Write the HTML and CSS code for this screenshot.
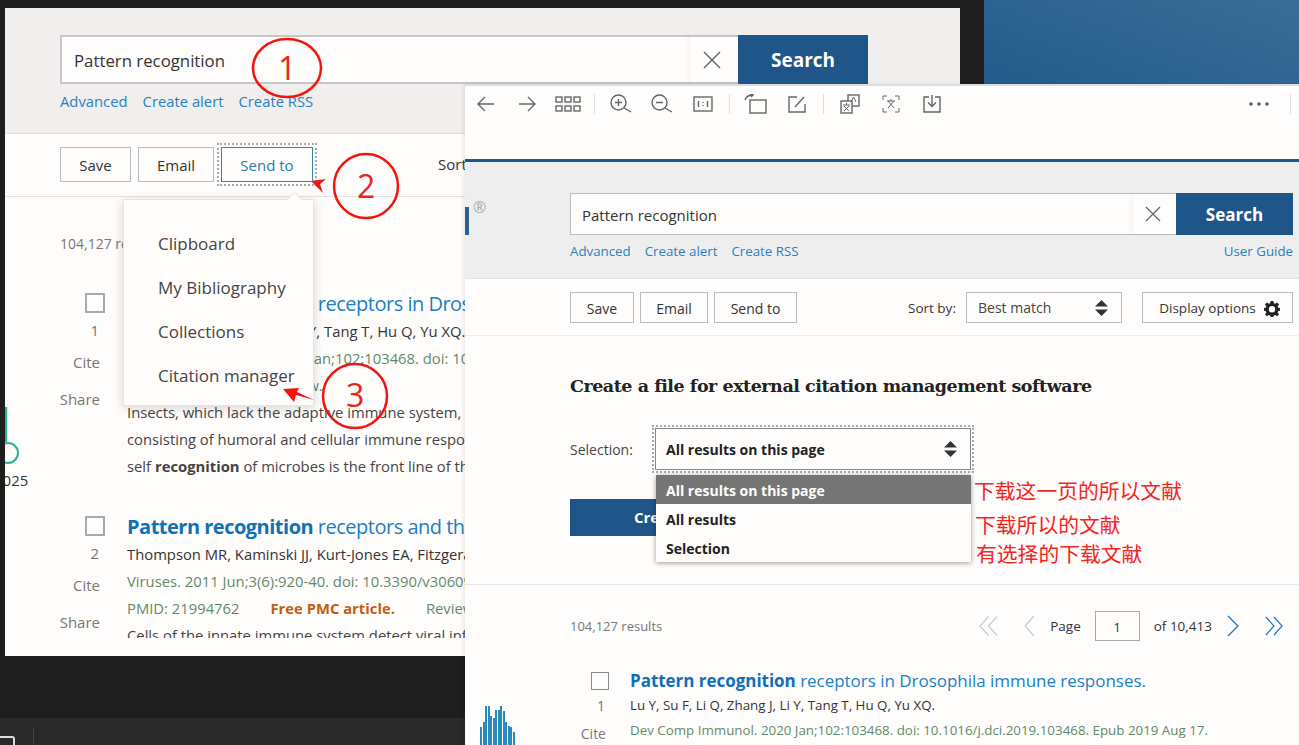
FILE: index.html
```html
<!DOCTYPE html>
<html>
  <head>
    <meta charset="utf-8">
    <title>Pattern recognition - citation manager</title>
    <link rel="stylesheet" href="styles.css">
  </head>
  <body>
    <div class="desktop">
      <div class="wallpaper"></div>
      <div class="taskbar">
        <span class="task-box"></span>
        <span class="task-line"></span>
      </div>

      <!-- back browser window -->
      <div class="win-back">
        <div class="back-head">
          <div class="back-search">
            <div class="back-input">Pattern recognition</div>
            <div class="back-clear">
              <svg width="20" height="20" viewBox="0 0 20 20"><path d="M2 2L18 18M18 2L2 18" stroke="#666" stroke-width="1.5" fill="none"/></svg>
            </div>
            <div class="back-go">Search</div>
          </div>
          <div class="back-links">
            <a>Advanced</a>
            <a>Create alert</a>
            <a>Create RSS</a>
          </div>
        </div>

        <div class="back-tools">
          <span class="back-btn btn-save">Save</span>
          <span class="back-btn btn-email">Email</span>
          <span class="back-btn btn-send">Send to</span>
          <span class="back-sort">Sort by:</span>
        </div>

        <div class="back-main">
          <div class="back-count">104,127 results</div>

          <div class="back-result">
            <div class="back-side">
              <span class="back-check"></span>
              <span class="back-num">1</span>
              <span class="back-act act-cite">Cite</span>
              <span class="back-act act-share">Share</span>
            </div>
            <div class="back-body">
              <div class="back-title"><b>Pattern recognition</b> receptors in Drosophila immune responses.</div>
              <div class="back-line">Lu Y, Su F, Li Q, Zhang J, Li Y, Tang T, Hu Q, Yu XQ.</div>
              <div class="back-line green">Dev Comp Immunol. 2020 Jan;102:103468. doi: 10.1016/j.dci.2019.103468.</div>
              <div class="back-line green"><span class="pmid">PMID: 31430490</span>Review.</div>
              <div class="back-line grey">Insects, which lack the adaptive immune system, rely on the innate immunity</div>
              <div class="back-line grey">consisting of humoral and cellular immune responses to defend against</div>
              <div class="back-line grey">self <b>recognition</b> of microbes is the front line of the innate immune system</div>
            </div>
          </div>

          <div class="back-result second">
            <div class="back-side">
              <span class="back-check"></span>
              <span class="back-num">2</span>
              <span class="back-act act-cite">Cite</span>
              <span class="back-act act-share">Share</span>
            </div>
            <div class="back-body">
              <div class="back-title"><b>Pattern recognition</b> receptors and the innate immune response</div>
              <div class="back-line">Thompson MR, Kaminski JJ, Kurt-Jones EA, Fitzgerald KA.</div>
              <div class="back-line green">Viruses. 2011 Jun;3(6):920-40. doi: 10.3390/v3060920.</div>
              <div class="back-line green"><span class="pmid">PMID: 21994762</span><span class="free">Free PMC article.</span>Review.</div>
              <div class="back-line grey">Cells of the innate immune system detect viral infection</div>
            </div>
          </div>
        </div>

        <div class="timeline">
          <svg width="30" height="70" viewBox="0 0 30 70"><path d="M1 0V35" stroke="#2bb296" stroke-width="2.5" fill="none"/><circle cx="3" cy="46" r="10" stroke="#2bb296" stroke-width="2" fill="none"/></svg>
          <span class="timeline-year">2025</span>
        </div>

        <div class="send-menu">
          <span class="send-tip"></span>
          <div class="send-item">Clipboard</div>
          <div class="send-item">My Bibliography</div>
          <div class="send-item">Collections</div>
          <div class="send-item">Citation manager</div>
        </div>
      </div>

      <!-- red notes drawn over the back window -->
      <svg class="marks" width="470" height="440" viewBox="0 0 470 440">
        <ellipse cx="287" cy="68" rx="34" ry="29" stroke="#f5140c" stroke-width="2.5" fill="none"/>
        <circle cx="366" cy="186" r="32" stroke="#f5140c" stroke-width="2.5" fill="none"/>
        <circle cx="355" cy="396" r="32" stroke="#f5140c" stroke-width="2.5" fill="none"/>
        <path d="M311 181L326 179L320 184L323 193Z" fill="#f5140c"/>
        <path d="M283 389L299 388L297 392L314 400L296 395L294 402Z" fill="#f5140c"/>
      </svg>
      <span class="mark-num num-1">1</span>
      <span class="mark-num num-2">2</span>
      <span class="mark-num num-3">3</span>

      <!-- front viewer window -->
      <div class="win-front">
        <div class="viewer-bar">
          <span class="tool"><svg width="20" height="20" viewBox="0 0 20 20"><path d="M18 10H2M9 3L2 10L9 17"/></svg></span>
          <span class="tool"><svg width="20" height="20" viewBox="0 0 20 20"><path d="M2 10H18M11 3L18 10L11 17"/></svg></span>
          <span class="tool"><svg width="26" height="16" viewBox="0 0 26 16"><rect x="1" y="1" width="6" height="5"/><rect x="10" y="1" width="6" height="5"/><rect x="19" y="1" width="6" height="5"/><rect x="1" y="10" width="6" height="5"/><rect x="10" y="10" width="6" height="5"/><rect x="19" y="10" width="6" height="5"/></svg></span>
          <span class="tool-sep"></span>
          <span class="tool"><svg width="22" height="20" viewBox="0 0 22 20"><circle cx="8.5" cy="8.5" r="7.5"/><path d="M5 8.5H12M8.5 5V12M14 14L21 18"/></svg></span>
          <span class="tool"><svg width="22" height="20" viewBox="0 0 22 20"><circle cx="8.5" cy="8.5" r="7.5"/><path d="M5 8.5H12M14 14L21 18"/></svg></span>
          <span class="tool"><svg width="20" height="16" viewBox="0 0 20 16"><rect x="1" y="1" width="18" height="14"/><path d="M5.5 5V11M14.5 5V11M10 6V7M10 9V10"/></svg></span>
          <span class="tool-sep"></span>
          <span class="tool"><svg width="24" height="20" viewBox="0 0 24 20"><rect x="6" y="6" width="16" height="13"/><path d="M1 6C2 3 5 1 9 1M6 0L9 1L7 3"/></svg></span>
          <span class="tool"><svg width="20" height="20" viewBox="0 0 20 20"><path d="M10 3H2V18H18V10M8 13L17 3"/></svg></span>
          <span class="tool-sep"></span>
          <span class="tool"><svg width="20" height="20" viewBox="0 0 20 20"><rect x="8" y="1" width="11" height="11"/><rect class="solid" x="1" y="7" width="11" height="12"/><path class="thin" d="M3 11H10M6.500 9V11M4 17L9 12M4 12L9 17M11 8L13.500 3L16 8"/></svg></span>
          <span class="tool"><svg width="18" height="18" viewBox="0 0 18 18"><path d="M1 5V1H5M13 1H17V5M17 13V17H13M5 17H1V13M5 6H13M9 4V6M6 13L12 6M6 6L12 13" class="thin"/></svg></span>
          <span class="tool"><svg width="18" height="18" viewBox="0 0 18 18"><path d="M6 2H1V17H17V2H12M9 0V11M5 7.500L9 11.500L13 7.500"/></svg></span>
          <span class="viewer-more">
            <svg width="20" height="4" viewBox="0 0 20 4"><circle cx="2" cy="2" r="1.700"/><circle cx="10" cy="2" r="1.700"/><circle cx="18" cy="2" r="1.700"/></svg>
          </span>
          <span class="more-sep"></span>
        </div>

        <div class="front-head">
          <span class="logo-edge"></span>
          <span class="logo-reg">®</span>
          <div class="front-search">
            <div class="front-input">Pattern recognition</div>
            <div class="front-clear">
              <svg width="16" height="16" viewBox="0 0 16 16"><path d="M1 1L15 15M15 1L1 15" stroke="#666" stroke-width="1.300" fill="none"/></svg>
            </div>
            <div class="front-go">Search</div>
          </div>
          <div class="front-links">
            <a>Advanced</a>
            <a>Create alert</a>
            <a>Create RSS</a>
            <a class="guide">User Guide</a>
          </div>
        </div>

        <div class="front-tools">
          <span class="front-btn btn-w64">Save</span>
          <span class="front-btn btn-w67">Email</span>
          <span class="front-btn btn-w82">Send to</span>
          <span class="sort-label">Sort by:</span>
          <span class="sort-select">Best match
            <svg width="13" height="16" viewBox="0 0 13 16"><path d="M6.500 0L13 6.500H0ZM6.500 16L0 9.500H13Z" fill="#333"/></svg>
          </span>
          <span class="front-btn display-btn">Display options
            <svg width="16" height="16" viewBox="0 0 16 16"><path fill="#222" fill-rule="evenodd" d="M6.600 0H9.400L9.800 2.200L11.300 2.800L13.100 1.500L15 3.400L13.700 5.200L14.300 6.700L16 7V9.800L14.300 10.100L13.700 11.600L15 13.400L13.100 15.300L11.300 14L9.800 14.600L9.400 16H6.600L6.200 14.600L4.700 14L2.900 15.300L1 13.400L2.300 11.600L1.700 10.100L0 9.800V7L1.700 6.700L2.300 5.200L1 3.400L2.900 1.500L4.700 2.800L6.200 2.200ZM8 5A3.200 3.200 0 1 0 8 11.400A3.200 3.200 0 1 0 8 5Z"/></svg>
          </span>
        </div>

        <div class="cite-panel">
          <h2>Create a file for external citation management software</h2>
          <div class="cite-row">
            <span class="cite-label">Selection:</span>
            <span class="cite-select">All results on this page
              <svg width="13" height="16" viewBox="0 0 13 16"><path d="M6.500 0L13 6.500H0ZM6.500 16L0 9.500H13Z" fill="#333"/></svg>
            </span>
          </div>
          <div class="cite-create">Create file</div>
          <div class="cite-options">
            <div class="cite-option active">All results on this page</div>
            <div class="cite-option">All results</div>
            <div class="cite-option">Selection</div>
          </div>
        </div>

        <div class="pager-row">
          <span class="front-count">104,127 results</span>
          <span class="pager">
            <svg class="pg-first" width="19" height="22" viewBox="0 0 20 22"><path d="M10 1L1 11L10 21M19 1L10 11L19 21" stroke="#ccc"/></svg>
            <svg class="pg-prev" width="11" height="22" viewBox="0 0 11 22"><path d="M10 1L1 11L10 21" stroke="#ccc"/></svg>
            <span class="pg-word">Page</span>
            <span class="pg-box">1</span>
            <span class="pg-of">of 10,413</span>
            <svg class="pg-next" width="12" height="22" viewBox="0 0 12 22"><path d="M1 1L11 11L1 21" stroke="#1a73c4"/></svg>
            <svg class="pg-last" width="18" height="22" viewBox="0 0 20 22"><path d="M1 1L10 11L1 21M10 1L19 11L10 21" stroke="#1a73c4"/></svg>
          </span>
        </div>

        <div class="front-result">
          <div class="front-side">
            <span class="front-check"></span>
            <span class="front-num">1</span>
            <span class="front-cite">Cite</span>
          </div>
          <div class="front-body">
            <div class="front-title"><b>Pattern recognition</b> receptors in Drosophila immune responses.</div>
            <div class="front-line">Lu Y, Su F, Li Q, Zhang J, Li Y, Tang T, Hu Q, Yu XQ.</div>
            <div class="front-line green">Dev Comp Immunol. 2020 Jan;102:103468. doi: 10.1016/j.dci.2019.103468. Epub 2019 Aug 17.</div>
          </div>
        </div>

        <svg class="histogram" width="36" height="40" viewBox="0 0 36 40">
          <g fill="#2a8bb9">
            <rect x="0" y="22" width="2" height="18"/>
            <rect x="3" y="17" width="2" height="23"/>
            <rect x="5" y="1" width="2" height="39"/>
            <rect x="8" y="1" width="2" height="39"/>
            <rect x="10" y="11" width="2" height="29"/>
            <rect x="13" y="13" width="2" height="27"/>
            <rect x="15" y="5" width="2" height="35"/>
            <rect x="18" y="5" width="2" height="35"/>
            <rect x="20" y="1" width="2" height="39"/>
            <rect x="23" y="6" width="2" height="34"/>
            <rect x="25" y="17" width="2" height="23"/>
            <rect x="28" y="21" width="2" height="19"/>
            <rect x="30" y="22" width="2" height="18"/>
            <rect x="33" y="27" width="2" height="13"/>
          </g>
        </svg>
      </div>

      <span class="note note-1">下载这一页的所以文献</span>
      <span class="note note-2">下载所以的文献</span>
      <span class="note note-3">有选择的下载文献</span>
    </div>
  </body>
</html>
```

FILE: styles.css
```css
* {
  box-sizing: border-box;
}

body {
  margin: 0;
  background-color: #1e1e1e;
  font-family: "Open Sans", "Noto Sans", sans-serif;
  overflow: hidden;
}

a {
  color: #2a7fc1;
}

b {
  font-weight: 700;
}

.desktop {
  position: relative;
  width: 1299px;
  height: 745px;
  overflow: hidden;
}

.wallpaper {
  position: absolute;
  left: 984px;
  top: 0;
  width: 315px;
  height: 90px;
  background: linear-gradient(20deg, #225a8a, #3a6e98);
}

.taskbar {
  position: absolute;
  left: 0;
  top: 718px;
  width: 466px;
  height: 27px;
  background-color: #292929;
}

.task-box {
  position: absolute;
  left: -6px;
  top: 18px;
  width: 21px;
  height: 20px;
  border: 2px solid #ddd;
  border-radius: 3px;
}

.task-line {
  position: absolute;
  left: 33px;
  top: 10px;
  width: 1px;
  height: 17px;
  background-color: #444;
}

/* back window */
.win-back {
  position: absolute;
  left: 5px;
  top: 8px;
  width: 955px;
  height: 648px;
  background-color: #fffdfb;
  overflow: hidden;
}

.back-head {
  height: 126px;
  padding: 27px 0 0 55px;
  background-color: #f1efed;
  border-bottom: 1px solid #e2e0df;
}

.back-search {
  display: flex;
  width: 808px;
  height: 49px;
}

.back-input {
  flex: 1;
  padding: 2px 0 0 12px;
  line-height: 43px;
  font-size: 16.8px;
  color: #333;
  background-color: #fffdfb;
  border: 2px solid #c8c6c6;
  border-right: none;
}

.back-clear {
  display: flex;
  align-items: center;
  justify-content: center;
  width: 48px;
  padding-right: 4px;
  background-color: #fffdfb;
  border-top: 2px solid #c8c6c6;
  border-bottom: 2px solid #c8c6c6;
  box-shadow: -3px 0 4px rgba(0, 0, 0, 0.03);
}

.back-go {
  width: 130px;
  padding-top: 2px;
  line-height: 47px;
  text-align: center;
  font-size: 19px;
  font-weight: 700;
  color: #fff;
  background-color: #20558a;
}

.back-links {
  display: flex;
  gap: 15px;
  margin-top: 7px;
  font-size: 14.8px;
  line-height: 20px;
}

/* the front window starts 460px into this one */
.back-tools {
  display: flex;
  gap: 7px;
  width: 460px;
  height: 63px;
  padding: 13px 0 0 55px;
  border-bottom: 1px solid #e6e4e2;
  overflow: hidden;
}

.back-btn {
  flex-shrink: 0;
  height: 35px;
  padding-top: 2px;
  line-height: 31px;
  text-align: center;
  font-size: 15px;
  color: #333;
  border: 1px solid #bbb;
}

.btn-save {
  width: 71px;
}

.btn-email {
  width: 76px;
}

.btn-send {
  width: 92px;
  color: #2a7fa8;
  border-color: #3a86a8;
  outline: 2px dotted #aaa;
  outline-offset: 2px;
}

.back-sort {
  flex-shrink: 0;
  margin-left: 118px;
  line-height: 35px;
  font-size: 15px;
  white-space: nowrap;
  color: #333;
}

.back-main {
  width: 460px;
  padding: 36px 0 0 55px;
  overflow: hidden;
}

.back-count {
  line-height: 22px;
  font-size: 14px;
  color: #777;
}

.back-result {
  display: flex;
  gap: 22px;
  height: 223px;
  margin-top: 38px;
}

.back-result.second {
  margin-top: 0;
  height: 122px;
  overflow: hidden;
}

.back-side {
  display: flex;
  flex-direction: column;
  align-items: flex-end;
  width: 45px;
  flex-shrink: 0;
  color: #777;
  font-size: 15px;
}

.back-check {
  width: 20px;
  height: 20px;
  flex-shrink: 0;
  border: 2px solid #aaa;
}

.back-num {
  margin: 6px 6px 0 0;
  line-height: 22px;
}

.back-act {
  margin-right: 5px;
  line-height: 22px;
}

.act-cite {
  margin-top: 10px;
}

.act-share {
  margin-top: 15px;
}

.back-body {
  min-width: 0;
  margin-top: -3px;
  white-space: nowrap;
}

.back-title {
  line-height: 28px;
  font-size: 20px;
  letter-spacing: -0.5px;
  color: #1a7fc4;
}

.back-title b {
  color: #0f6fb8;
}

.back-line {
  line-height: 27px;
  font-size: 14.8px;
  color: #333;
}

.back-line.green,
.front-line.green {
  color: #5f8a6c;
}

.back-line.grey {
  color: #444;
}

.pmid {
  margin-right: 31px;
}

.free {
  margin-right: 31px;
  font-weight: 700;
  color: #c0600f;
}

.timeline {
  position: absolute;
  left: 0;
  top: 399px;
  width: 30px;
  height: 85px;
}

.timeline-year {
  position: absolute;
  left: -11px;
  top: 63px;
  font-size: 15px;
  color: #333;
}

.send-menu {
  position: absolute;
  left: 118px;
  top: 191px;
  width: 191px;
  height: 207px;
  padding-top: 22px;
  background-color: #fffdfb;
  border: 1px solid #e8e6e4;
  box-shadow: 0 2px 10px rgba(0, 0, 0, 0.16);
}

.send-item {
  height: 44px;
  padding-left: 34px;
  line-height: 44px;
  font-size: 17px;
  color: #444;
}

.send-tip {
  position: absolute;
  left: 165px;
  top: -6px;
  width: 11px;
  height: 11px;
  background-color: #fffdfb;
  border-left: 1px solid #e8e6e4;
  border-top: 1px solid #e8e6e4;
  transform: rotate(45deg);
}

/* red notes */
.marks {
  position: absolute;
  left: 0;
  top: 0;
}

.mark-num {
  position: absolute;
  font-size: 32px;
  line-height: 40px;
  color: #e8261c;
}

.num-1 {
  left: 278px;
  top: 48px;
}

.num-2 {
  left: 357px;
  top: 166px;
}

.num-3 {
  left: 346px;
  top: 375px;
}

.note {
  position: absolute;
  font-family: "Noto Sans CJK SC", sans-serif;
  font-size: 20.8px;
  line-height: 30px;
  white-space: nowrap;
  color: #f5241c;
}

.note-1 {
  left: 974px;
  top: 475px;
}

.note-2 {
  left: 975px;
  top: 509px;
}

.note-3 {
  left: 976px;
  top: 538px;
}

/* front window */
.win-front {
  position: absolute;
  left: 465px;
  top: 84px;
  width: 834px;
  height: 661px;
  background-color: #fffdfb;
  box-shadow: -2px 0 4px rgba(0, 0, 0, 0.08);
  overflow: hidden;
}

.viewer-bar {
  display: flex;
  align-items: flex-start;
  height: 78px;
  padding-top: 8px;
  border-top: 2px solid #ddd;
  border-bottom: 3px solid #20558a;
}

.tool {
  display: flex;
  align-items: center;
  justify-content: center;
  width: 41px;
  height: 20px;
}

.tool svg {
  fill: none;
  stroke: #666;
  stroke-width: 1.400;
}

.tool svg .thin {
  stroke-width: 1;
}

.tool svg .solid {
  fill: #fffdfb;
}

.tool-sep {
  width: 1px;
  height: 20px;
  margin: 0 5px 0 6px;
  background-color: #ddd;
}

.viewer-more {
  display: flex;
  align-items: center;
  height: 20px;
  margin-left: 297px;
  fill: #555;
}

.more-sep {
  width: 1px;
  height: 20px;
  margin-left: 21px;
  background-color: #ddd;
}

.front-head {
  position: relative;
  height: 117px;
  padding: 31px 6px 0 105px;
  background-color: #efeeee;
  border-bottom: 1px solid #e2e2e2;
}

.logo-edge {
  position: absolute;
  left: 0;
  top: 45px;
  width: 4px;
  height: 28px;
  background-color: #2e6096;
}

.logo-reg {
  position: absolute;
  left: 8px;
  top: 34px;
  font-size: 16px;
  line-height: 22px;
  color: #aaa;
}

.front-search {
  display: flex;
  height: 42px;
}

.front-input {
  flex: 1;
  padding: 2px 0 0 11px;
  line-height: 38px;
  font-size: 15px;
  color: #333;
  background-color: #fffdfb;
  border: 1px solid #bbb;
  border-right: none;
}

.front-clear {
  display: flex;
  align-items: center;
  justify-content: center;
  width: 43px;
  padding-right: 4px;
  background-color: #fffdfb;
  border-top: 1px solid #bbb;
  border-bottom: 1px solid #bbb;
  box-shadow: -3px 0 4px rgba(0, 0, 0, 0.03);
}

.front-go {
  width: 117px;
  padding-top: 2px;
  line-height: 40px;
  text-align: center;
  font-size: 17px;
  font-weight: 700;
  color: #fff;
  background-color: #20558a;
}

.front-links {
  display: flex;
  gap: 14px;
  margin-top: 7px;
  font-size: 13.3px;
  line-height: 18px;
}

.guide {
  margin-left: auto;
}

.front-tools {
  display: flex;
  height: 57px;
  padding: 13px 6px 0 105px;
  border-bottom: 1px solid #eeeeee;
}

.front-btn {
  height: 31px;
  padding-top: 2px;
  line-height: 27px;
  text-align: center;
  font-size: 14px;
  color: #333;
  border: 1px solid #bbb;
}

.btn-w64 {
  width: 64px;
  margin-right: 6px;
}

.btn-w67 {
  width: 68px;
  margin-right: 6px;
}

.btn-w82 {
  width: 83px;
}

.sort-label {
  margin-left: 111px;
  line-height: 33px;
  font-size: 13.5px;
  color: #333;
}

.sort-select {
  display: flex;
  align-items: center;
  justify-content: space-between;
  width: 156px;
  height: 31px;
  margin-left: auto;
  padding: 0 13px 0 11px;
  font-size: 14px;
  color: #444;
  border: 1px solid #bbb;
}

.display-btn {
  display: flex;
  align-items: center;
  justify-content: center;
  gap: 8px;
  width: 151px;
  margin-left: 20px;
  padding-left: 4px;
  font-size: 13.5px;
}

.cite-panel {
  position: relative;
  height: 249px;
  padding: 36px 0 0 105px;
  border-bottom: 1px solid #e6e6e6;
}

.cite-panel h2 {
  margin: 0;
  font-family: "DejaVu Serif", serif;
  font-size: 17.500px;
  line-height: 28px;
  letter-spacing: -0.47px;
  color: #222;
}

.cite-row {
  display: flex;
  align-items: center;
  margin-top: 28px;
}

.cite-label {
  width: 85px;
  font-size: 14px;
  color: #444;
}

.cite-select {
  display: flex;
  align-items: center;
  justify-content: space-between;
  width: 316px;
  height: 42px;
  padding: 0 13px 0 10px;
  font-size: 14px;
  font-weight: 700;
  color: #222;
  border: 1px solid #888;
  outline: 2px dotted #aaa;
  outline-offset: 1px;
}

.cite-create {
  width: 300px;
  height: 37px;
  margin-top: 29px;
  padding-left: 64px;
  line-height: 37px;
  font-size: 15px;
  font-weight: 700;
  color: #fff;
  background-color: #20558a;
}

.cite-options {
  position: absolute;
  left: 191px;
  top: 139px;
  width: 315px;
  background-color: #fffdfb;
  box-shadow: 0 1px 5px rgba(0, 0, 0, 0.4);
}

.cite-option {
  height: 29px;
  padding: 2px 0 0 10px;
  line-height: 27px;
  font-size: 14px;
  font-weight: 700;
  color: #222;
}

.cite-option.active {
  color: #fff;
  background-color: #757575;
}

.pager-row {
  display: flex;
  justify-content: space-between;
  align-items: center;
  height: 30px;
  margin-top: 26px;
  padding: 0 16px 0 105px;
}

.front-count {
  font-size: 13px;
  color: #777;
}

.pager {
  display: flex;
  align-items: center;
  font-size: 13.5px;
  color: #333;
}

.pager svg {
  fill: none;
  stroke-width: 1.300;
}

.pg-prev {
  margin-left: 26px;
}

.pg-word {
  margin-left: 15px;
}

.pg-box {
  width: 45px;
  height: 30px;
  margin-left: 14px;
  padding-top: 2px;
  line-height: 26px;
  text-align: center;
  background-color: #fffdfb;
  border: 1px solid #aaa;
}

.pg-of {
  margin-left: 14px;
}

.pg-next {
  margin-left: 15px;
}

.pg-last {
  margin-left: 26px;
}

.front-result {
  display: flex;
  gap: 21px;
  margin-top: 31px;
  padding-left: 127px;
}

.front-side {
  display: flex;
  flex-direction: column;
  align-items: flex-end;
  width: 17px;
  flex-shrink: 0;
  font-size: 14px;
  color: #777;
}

.front-check {
  width: 18px;
  height: 18px;
  flex-shrink: 0;
  border: 1px solid #888;
}

.front-num {
  margin: 7px 4px 0 0;
  line-height: 18px;
}

.front-cite {
  margin: 10px 3px 0 0;
  line-height: 18px;
}

.front-body {
  margin-top: -3px;
  white-space: nowrap;
}

.front-title {
  line-height: 24px;
  font-size: 17px;
  letter-spacing: -0.03px;
  color: #1a7fc4;
}

.front-title b {
  color: #0f6fb8;
}

.front-line {
  line-height: 25px;
  font-size: 13.35px;
  color: #333;
}

.histogram {
  position: absolute;
  left: 15px;
  top: 621px;
}
```
